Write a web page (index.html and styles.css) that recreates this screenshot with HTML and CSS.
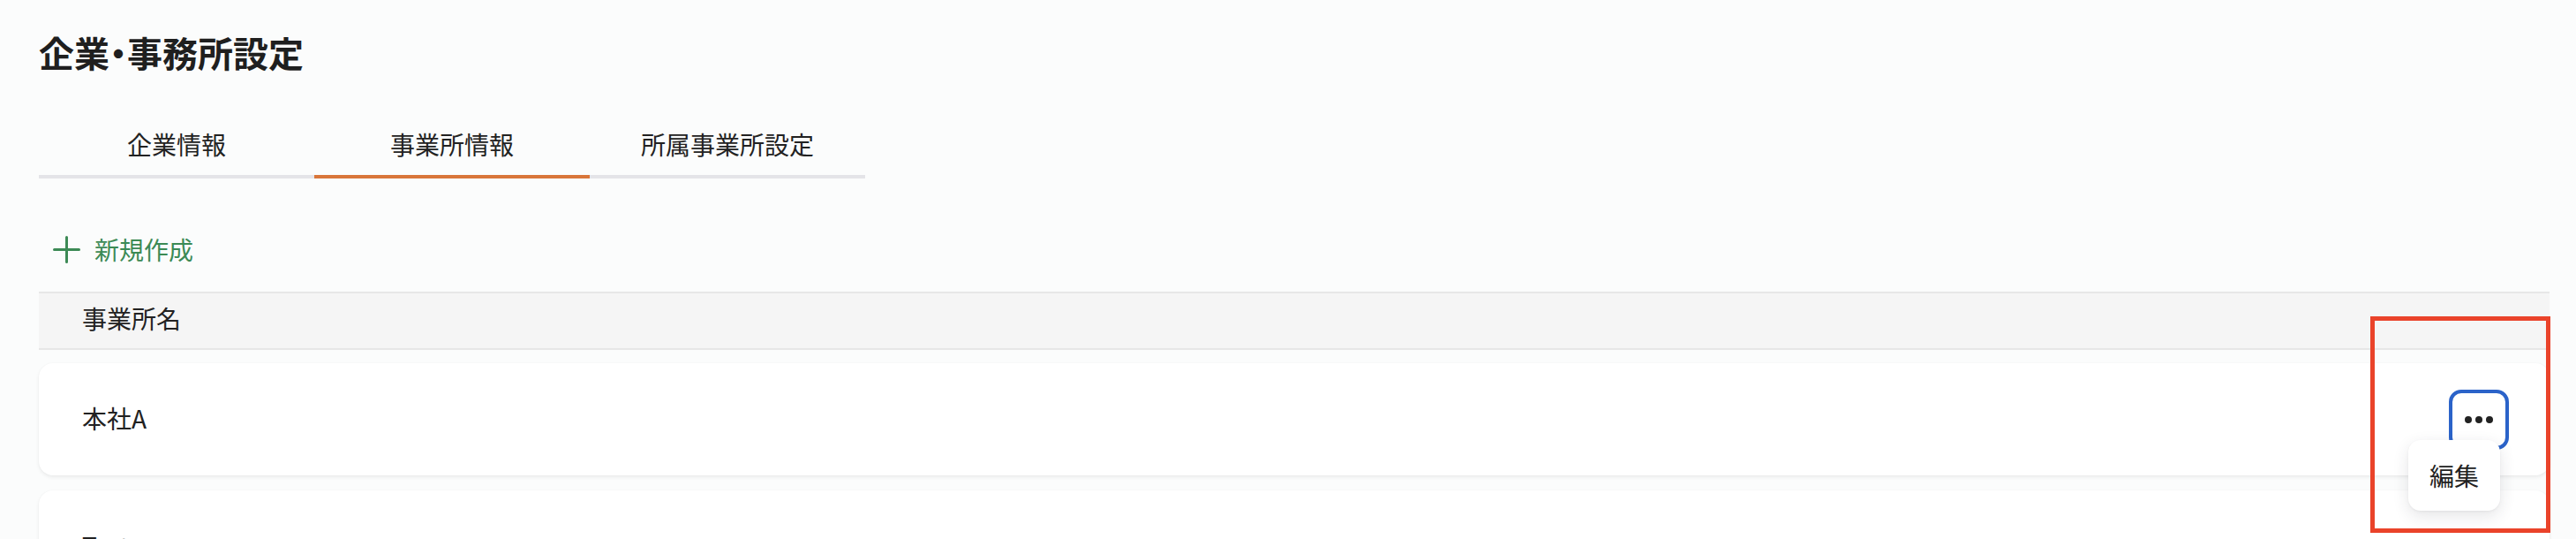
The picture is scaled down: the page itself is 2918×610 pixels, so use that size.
FILE: index.html
```html
<!DOCTYPE html>
<html lang="ja">
<head>
<meta charset="utf-8">
<title>企業・事務所設定</title>
<link rel="stylesheet" href="styles.css">
</head>
<body>
<div class="page">
  <h1 class="title">企業<span class="dot">・</span>事務所設定</h1>

  <div class="tabs">
    <div class="tab">企業情報</div>
    <div class="tab active">事業所情報</div>
    <div class="tab">所属事業所設定</div>
  </div>

  <button class="new-btn" type="button">
    <svg class="plus" width="31" height="31" viewBox="0 0 31 31" aria-hidden="true">
      <path d="M15.5 1.5V29.5M1.5 15.5H29.5" stroke="#3c8a55" stroke-width="3" stroke-linecap="round" fill="none"/>
    </svg>
    <span>新規作成</span>
  </button>

  <div class="list">
    <div class="list-head">事業所名</div>

    <div class="card">
      <span class="name">本社A</span>
      <button class="more" type="button" aria-label="メニュー">
        <span class="d"></span><span class="d"></span><span class="d"></span>
      </button>
      <div class="menu">編集</div>
    </div>

    <div class="card">
      <span class="name">Test</span>
    </div>
  </div>

  <div class="highlight"></div>
</div>
</body>
</html>
```
FILE: styles.css
```css
* { box-sizing: border-box; }

html, body {
  margin: 0;
  padding: 0;
  background: #fbfcfc;
  height: 100%;
  overflow: hidden;
}

body {
  font-family: "Noto Sans CJK JP", "Noto Sans", sans-serif;
  color: #222222;
}

.page {
  position: relative;
  padding: 39px 30px 0 44px;
}

.title {
  margin: 0;
  font-size: 40px;
  line-height: 40px;
  font-weight: 700;
  color: #1f1f1f;
}

.title .dot {
  font-feature-settings: "palt" 1;
}

.tabs {
  display: flex;
  margin-top: 70px;
}

.tab {
  width: 312px;
  text-align: center;
  font-size: 28px;
  line-height: 28px;
  padding-bottom: 21px;
  border-bottom: 4px solid #e4e4e8;
  color: #222;
}

.tab.active {
  border-bottom-color: #d9763a;
}

.new-btn {
  display: flex;
  align-items: center;
  gap: 16px;
  margin: 65px 0 0 16px;
  padding: 0;
  border: 0;
  background: none;
  font-family: inherit;
  font-size: 28px;
  line-height: 31px;
  color: #3c8a55;
  cursor: pointer;
}

.plus { display: block; }

.list {
  margin-top: 32px;
}

.list-head {
  background: #f5f5f5;
  border-top: 2px solid #e7e7e7;
  border-bottom: 2px solid #e7e7e7;
  padding: 14px 48px 20px 49px;
  font-size: 28px;
  line-height: 28px;
  color: #222;
}

.card {
  position: relative;
  display: flex;
  align-items: center;
  justify-content: space-between;
  height: 127px;
  margin-top: 15px;
  padding: 0 46px 4px 49px;
  background: #ffffff;
  border-radius: 16px;
  box-shadow: 0 2px 4px rgba(0, 0, 0, 0.07), 0 0 2px rgba(0, 0, 0, 0.03);
}

.card + .card { margin-top: 17px; }

.name {
  font-size: 28px;
  line-height: 28px;
}

.more {
  display: flex;
  align-items: center;
  justify-content: center;
  gap: 4px;
  width: 68px;
  height: 68px;
  margin-top: 4px;
  padding: 0;
  border: 4px solid #2b63c9;
  border-radius: 14px;
  background: #ffffff;
  cursor: pointer;
}

.more .d {
  width: 8px;
  height: 8px;
  border-radius: 50%;
  background: #222;
}

.menu {
  position: absolute;
  z-index: 5;
  top: 87px;
  right: 56px;
  width: 104px;
  height: 80px;
  display: flex;
  align-items: center;
  justify-content: center;
  background: #ffffff;
  border-radius: 14px;
  box-shadow: 0 6px 18px rgba(40, 40, 60, 0.12), 0 1px 3px rgba(0, 0, 0, 0.05);
  font-size: 28px;
  line-height: 28px;
  color: #222;
}

.highlight {
  position: absolute;
  z-index: 10;
  left: 2685px;
  top: 358px;
  width: 204px;
  height: 245px;
  border: 5px solid #ea432a;
  pointer-events: none;
}
```
